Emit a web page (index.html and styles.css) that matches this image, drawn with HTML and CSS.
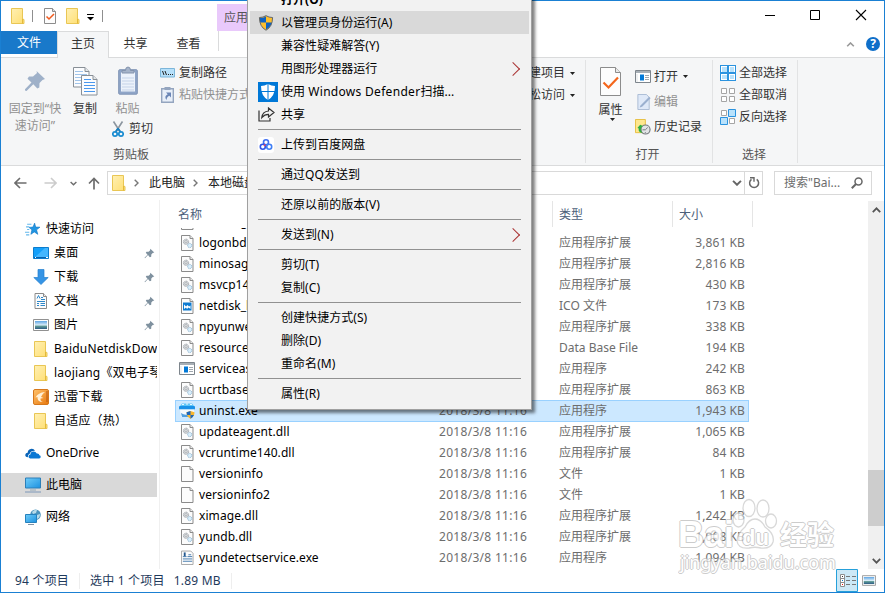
FILE: index.html
```html
<!DOCTYPE html>
<html lang="zh-CN">
<head>
    <meta charset="UTF-8">
    <title>BaiduNetdisk</title>
    <link rel="stylesheet" href="styles.css">
</head>
<body>
<!-- Icon sprite -->
<svg class="sprite">
    <linearGradient id="gFolder" x1="0" y1="0" x2="1" y2="1"><stop offset="0" stop-color="#fff0b4"/><stop offset="1" stop-color="#ffdf73"/></linearGradient>
    <linearGradient id="gBlue" x1="0" y1="0" x2="1" y2="1"><stop offset="0" stop-color="#70cdf9"/><stop offset="1" stop-color="#1c91e0"/></linearGradient>
    <linearGradient id="gSky" x1="0" y1="0" x2="0" y2="1"><stop offset="0" stop-color="#5fa5e4"/><stop offset=".5" stop-color="#d8ecf8"/><stop offset=".65" stop-color="#5f9a95"/><stop offset="1" stop-color="#2d5b86"/></linearGradient>
    <linearGradient id="gOrange" x1="0" y1="0" x2="1" y2="1"><stop offset="0" stop-color="#ffc36d"/><stop offset="1" stop-color="#e8770b"/></linearGradient>
    <symbol id="folder" viewBox="0 0 14 16"><path d="M.5.5h11v10.500l1.500.500v4H.5z" fill="url(#gFolder)" stroke="#e9c654"/><path d="M11.500 11v4.500" stroke="#e3b93b"/></symbol>
    <symbol id="check-page" viewBox="0 0 12 16"><path d="M.5.5h8l3 3v12H.5z" fill="#fdfdfd" stroke="#8c8c8c"/><path d="M8.500.5v3h3" fill="#ddd" stroke="#8c8c8c"/><path d="M2.500 8.500l2.500 2.500L10 6" fill="none" stroke="#f15a1d" stroke-width="1.500"/></symbol>
    <symbol id="dll" viewBox="0 0 13 16"><path d="M.5.5h8.500l3 3v12H.5z" fill="#fcfcfc" stroke="#8b8b8b"/><path d="M9 .5v3h3" fill="#eee" stroke="#8b8b8b"/><circle cx="5" cy="6.800" r="2.600" fill="#e4e6e8" stroke="#9aa0a6" stroke-width="1" stroke-dasharray="1.200 .5"/><circle cx="5" cy="6.800" r="1.200" fill="#fff" stroke="#8a9096" stroke-width=".7"/><circle cx="8.700" cy="10.500" r="2.100" fill="#d9eefa" stroke="#8fb6d3" stroke-width="1" stroke-dasharray="1.200 .5"/></symbol>
    <symbol id="page" viewBox="0 0 13 16"><path d="M.5.5h8.500l3 3v12H.5z" fill="#fcfcfc" stroke="#8b8b8b"/><path d="M9 .5v3h3" fill="#eee" stroke="#8b8b8b"/></symbol>
    <symbol id="ico" viewBox="0 0 13 16"><path d="M.5.5h8.500l3 3v12H.5z" fill="#fcfcfc" stroke="#8b8b8b"/><path d="M9 .5v3h3" fill="#eee" stroke="#8b8b8b"/><path d="M2 4.500h8.500v8H2z" fill="#0d7ad0"/><path d="M3 6.500l2 2 1.500-1.500 1.500 1.500 1.500-1V11l-2-1.500-1.500 1.500L5 9.500 3 11z" fill="#fff"/></symbol>
    <symbol id="app" viewBox="0 0 16 13"><path d="M.5.5h15v12H.5z" fill="#fff" stroke="#7d858c"/><path d="M1 1h14v2H1z" fill="#a7afb6"/><path d="M5 4.500h4v6H5z" fill="#0078d7"/><path d="M10 5.500h4M10 7.500h4M10 9.500h4" stroke="#9fa7ae"/><path d="M2 4v8" stroke="#dfe3e6"/></symbol>
    <symbol id="uninst" viewBox="0 0 16 16"><path d="M1 3L3 .5h10L15 3z" fill="#5cc4f8"/><path d="M3 1.500h2M7 1h2M11 1.500h2" stroke="#e9f7ff"/><rect x="0" y="3" width="16" height="3.500" rx="1" fill="#1991e8"/><path d="M1 6.500h14V14H2z" fill="#f4f9fd"/><path d="M2 10q4 3 8 1v3H3z" fill="#4f9ee0"/><path d="M11.500 8l4 1.200q0 4.500-4 6.500-4-2-4-6.500z" fill="#f9b62c"/><path d="M11.500 8v4H8L7.500 9.200zM11.500 12h3.500q-.9 2.500-3.500 3.700z" fill="#1c66bd"/></symbol>
    <symbol id="service" viewBox="0 0 14 16"><path d="M.5.5h10l2.500 2.500v12H.5z" fill="#fcfcfc" stroke="#a5a5a5"/><path d="M2 6.500h4M8 4.500h3M7 6.500h5M2 9h10M2 11.500h10" stroke="#3f76ab"/><path d="M3 2h2v4H3z" fill="#24588f"/></symbol>
    <symbol id="pin-s" viewBox="0 0 11 11"><path d="M6.300.8L10.300 4.600 8.700 5.100 7.300 6.500 7.200 8.700 5.800 9.200 4 7.100 1 10.200.5 9.800 3.500 6.700 1.800 4.800 2.500 3.700 4.600 3.800 6 2.400z" fill="#7f919f"/></symbol>
    <symbol id="star" viewBox="0 0 15 14"><path d="M9 1.500l1 3.700 4 .1-3.200 2.500 1.200 4.200-3.300-2.300L5.500 12l1-4.200-2.700-2.300 3.700-.3z" fill="#2196e3" stroke="#1178c4" stroke-width=".6"/><path d="M2 2.500h4M1 5h3M2 7.500h2M0 10h4M1 12.500h3" stroke="#64b8ec"/></symbol>
    <symbol id="desktop" viewBox="0 0 16 12"><path d="M.5.5h15v11H.5z" fill="#14a0fa" stroke="#0c7ccd"/><path d="M1 11L12 1h3v10z" fill="#43b6ff"/><path d="M1 10.500h14" stroke="#0861ae"/><path d="M2 10.500h1M13 10.500h2" stroke="#fff"/></symbol>
    <symbol id="down" viewBox="0 0 16 16"><path d="M5 .5h6v8h4.200L8 15.500.8 8.500H5z" fill="#3594e5" stroke="#247fce" stroke-width=".7"/></symbol>
    <symbol id="doc" viewBox="0 0 13 16"><path d="M.5.5h8.500l3 3v12H.5z" fill="#fcfcfc" stroke="#8b8b8b"/><path d="M9 .5v3h3" fill="#eee" stroke="#8b8b8b"/><path d="M2.500 5.500L4 2.500l1.500 3M6.500 4.500h2M6.500 6.500h4M2.500 8.500h8M2.500 10.500h2M6 10.500h4.500M2.500 12.500h2M6 12.500h4.500" fill="none" stroke="#2d87c9"/></symbol>
    <symbol id="picture" viewBox="0 0 16 12"><path d="M.5.5h15v11H.5z" fill="#fff" stroke="#919191"/><path d="M2 2h12v8H2z" fill="url(#gSky)"/></symbol>
    <symbol id="xunlei" viewBox="0 0 16 16"><rect x=".5" y=".5" width="15" height="15" rx="1.500" fill="url(#gOrange)" stroke="#d6781c"/><path d="M14 2v11" stroke="#b7560e"/><path d="M12 3Q5 3.500 2.500 8.500l2-.5Q4 13 10 13 7 12 7.500 9.500L10.500 9 8 8Q9 5 12 3z" fill="#fff0d6"/></symbol>
    <symbol id="onedrive" viewBox="0 0 17 11"><path d="M3 9.500Q0 9.300.3 6.800.6 5 2.800 4.800 3 1.500 6 .7q3-.7 4.700 1.800-4.700-.3-5.700 3.200Q2.700 6.500 3 9.500z" fill="#0a64b8"/><path d="M5.500 10.800Q3.500 10.500 3.700 8.500 4 6.800 5.700 6.600 6 3.500 9 3.300q2.500 0 3.500 2.300 2.500-.4 2.800 1.800 1.500.3 1.400 1.800-.1 1.500-1.700 1.600z" fill="#0a78d4"/></symbol>
    <symbol id="pc" viewBox="0 0 16 15"><path d="M.5.5h15v10H.5z" fill="url(#gBlue)" stroke="#2d7fb8"/><path d="M5 12.500h6" stroke="#95a9b8"/><path d="M0 14.500h16" stroke="#7c97b8"/></symbol>
    <symbol id="network" viewBox="0 0 16 16"><circle cx="10.500" cy="5.800" r="5.300" fill="#4b93bd"/><path d="M7 3q3-3 5-2l-1 3-3 1zM12 6l3-1q0 4-3 5z" fill="#b9dcea"/><path d="M.5 5.500h11v8H.5z" fill="url(#gBlue)" stroke="#2681bd"/><path d="M3 15.500h6" stroke="#8193a5"/></symbol>
    <symbol id="shield" viewBox="0 0 16 17"><path d="M8 .7q3 2 7 2-.1 9.800-7 13.500Q1.100 12.500 1 2.700q4 0 7-2z" fill="#fdbf2d"/><path d="M8 1.500V8H1.800Q1.500 6 1.500 3.300 5 3.200 8 1.500z" fill="#0f62c1"/><path d="M8 8h6.200Q13 13 8 15.500z" fill="#0f62c1"/><path d="M8 .7q3 2 7 2-.1 9.800-7 13.500Q1.100 12.500 1 2.700q4 0 7-2z" fill="none" stroke="#57606b"/></symbol>
    <symbol id="pin-l" viewBox="0 0 22 22"><path d="M12.500 1L21 9l-2.500 1L15.500 13l-.2 4.500-2 1-4-4.200L2.500 21 1 20.500v-1.300l6.500-6.600-4-3.800L5 6.500h4l4-3.500z" fill="#9fb1c9"/></symbol>
    <symbol id="copy" viewBox="0 0 25 29"><g fill="#fbfcfe" stroke="#888f96"><path d="M.5.5h11.500l4 4v15.500H.5z"/><path d="M12 .5v4h4" fill="#e5e8ea"/></g><path d="M2 4.500h8M2 7.500h12M2 10.500h12M2 13.500h12M2 16.500h12" stroke="#a0c4ea"/><g fill="#fbfcfe" stroke="#888f96"><path d="M8.500 8.500H20l4 4v15.500H8.500z"/><path d="M20 8.500v4h4" fill="#e5e8ea"/></g><path d="M11 12.500h7M11 15.500h11M11 18.500h11M11 21.500h11M11 24.500h11" stroke="#4a98ee"/></symbol>
    <symbol id="paste" viewBox="0 0 20 29"><rect x=".7" y="3.700" width="18.600" height="24.500" rx="1" fill="#8fa5c8" stroke="#8094b5"/><path d="M3 6h14v19.500H3z" fill="#ecf2fb"/><path d="M4 12h12M4 15h12M4 18h12M4 21h12M4 24h12" stroke="#c5d3e8"/><path d="M4 7V4.500h3.500Q7.500 1 10 1t2.500 3.500H16V7z" fill="#a5b3c9" stroke="#8393ad"/></symbol>
    <symbol id="cut" viewBox="0 0 12 17"><path d="M1.500.5L8 10.500M10.500.5L4 10.500" stroke="#8b959f" stroke-width="1.600"/><path d="M6 7.500L3.500 11M6 7.500L8.500 11" stroke="#187fc0" stroke-width="1.800"/><circle cx="3" cy="13" r="2.200" fill="none" stroke="#188bd0" stroke-width="1.700"/><circle cx="9" cy="13" r="2.200" fill="none" stroke="#188bd0" stroke-width="1.700"/></symbol>
    <symbol id="path" viewBox="0 0 15 10"><path d="M.5.5h14v8.500H.5z" fill="#b6e0fa" stroke="#7cb6da"/><path d="M2.500 3l1.500 4M5 3l1.500 4" stroke="#222"/><path d="M8 6.500h1M10 6.500h1M12 6.500h1" stroke="#222"/></symbol>
    <symbol id="shortcut" viewBox="0 0 13 16"><path d="M.7 1.700h11.600v13.600H.7z" fill="#e8eff9" stroke="#94a5bf" stroke-width="1.400"/><path d="M3.500 0h6v3h-6z" fill="#94a5bf"/><path d="M5 5.500h5v5L8.300 8.800Q5.500 10 5.700 13 2.500 9.500 6.700 7.200z" fill="#6b86b6"/></symbol>
    <symbol id="props" viewBox="0 0 21 29"><path d="M.5.500h15l5 5v23H.5z" fill="#fdfdfd" stroke="#8c8c8c"/><path d="M15.500.5v5h5" fill="#e9e9e9" stroke="#8c8c8c"/><path d="M3.500 15.500l5 5L18 10.500" fill="none" stroke="#f4661c" stroke-width="2.200"/></symbol>
    <symbol id="edit" viewBox="0 0 14 17"><path d="M.5.500h9l3 3v13H.5z" fill="#dfe9f8" stroke="#a9bad3"/><path d="M3 12.500L12.500 3l1.500 1.500L5 13.500l-2.500.8z" fill="#9bb0cf"/></symbol>
    <symbol id="history" viewBox="0 0 17 17"><path d="M.5.500h10.500v14H.5z" fill="#fee78f" stroke="#e5bd3d"/><circle cx="11.200" cy="11.200" r="4.800" fill="#e2e4e6" stroke="#74797e" stroke-width="1.200"/><path d="M11 11.500l2.500-2.500M8 11.500h3M11 14v1" stroke="#70757a"/><path d="M2.500 9.500L5.500 6l3 1.500-1.500 1q-2 3 1 6.500-5-1-4-5z" fill="#2eae43"/></symbol>
    <symbol id="all" viewBox="0 0 16 16"><path d="M0 0h16v16H0z" fill="#2b93df"/><path d="M1 1h6v6H1zM9 1h6v6H9zM1 9h6v6H1zM9 9h6v6H9z" fill="#fff"/><path d="M2 2h5v5H2zM10 2h4v5h-4zM2 10h5v4H2zM10 10h4v4h-4z" fill="#b9e2fc"/></symbol>
    <symbol id="none" viewBox="0 0 16 16"><path d="M1.500 1.500h5v5h-5zM9.500 1.500h5v5h-5zM1.500 9.500h5v5h-5zM9.500 9.500h5v5h-5z" fill="#fff" stroke="#a5a5a5"/></symbol>
    <symbol id="invert" viewBox="0 0 16 16"><path d="M1.500 1.500h5v5h-5zM9.500 9.500h5v5h-5z" fill="#fff" stroke="#a5a5a5"/><path d="M8.500.500h7v7h-7zM.5 8.500h7v7H.5z" fill="#b9e2fc" stroke="#2b93df"/></symbol>
    <symbol id="caret" viewBox="0 0 5 3"><path d="M0 0h5L2.500 3z" fill="#222"/></symbol>
    <symbol id="left" viewBox="0 0 13 12"><path d="M12.500 6H1.500M6 1L1 6l5 5" fill="none" stroke="currentColor" stroke-width="1.600"/></symbol>
    <symbol id="right" viewBox="0 0 13 12"><path d="M.5 6h11M7 1l5 5-5 5" fill="none" stroke="currentColor" stroke-width="1.600"/></symbol>
    <symbol id="up" viewBox="0 0 12 13"><path d="M6 12.500V1.500M1 6.500l5-5 5 5" fill="none" stroke="currentColor" stroke-width="1.700"/></symbol>
    <symbol id="chev-d" viewBox="0 0 8 5"><path d="M.7.700L4 4 7.300.7" fill="none" stroke="currentColor" stroke-width="1.600"/></symbol>
    <symbol id="chev-u" viewBox="0 0 8 5"><path d="M.7 4.300L4 1l3.300 3.300" fill="none" stroke="currentColor" stroke-width="1.600"/></symbol>
    <symbol id="chev-r" viewBox="0 0 5 8"><path d="M.7.700L4 4 .7 7.300" fill="none" stroke="currentColor" stroke-width="1.400"/></symbol>
</svg>

<div class="window">
    <!-- Title bar -->
    <div class="titlebar">
        <svg class="t-folder"><use href="#folder"/></svg>
        <i class="t-line"></i>
        <svg class="t-check"><use href="#check-page"/></svg>
        <svg class="t-folder2"><use href="#folder"/></svg>
        <svg class="t-more" viewBox="0 0 7 7"><path d="M0 .5h7" stroke="#000"/><path d="M0 3h7L3.500 6.500z"/></svg>
        <i class="t-line"></i>
        <div class="context-tab">应用程序工具</div>
        <svg class="win-buttons" viewBox="0 0 104 12"><path d="M0 6.500h10M45.500 1.500h9v9h-9z" fill="none" stroke="#000"/><path d="M91 1l10 10M101 1L91 11" stroke="#000" stroke-width="1.100"/></svg>
    </div>

    <div class="tabs">
        <div class="tab file">文件</div>
        <div class="tab active">主页</div>
        <div class="tab">共享</div>
        <div class="tab">查看</div>
        <i class="tab-line"></i>
        <div class="tabs-right">
            <svg class="collapse"><use href="#chev-u"/></svg>
            <span class="help">?</span>
        </div>
    </div>

    <!-- Ribbon -->
    <div class="ribbon">
        <div class="group clipboard">
            <div class="group-body">
                <div class="big pin disabled"><svg><use href="#pin-l"/></svg><span>固定到“快<br>速访问”</span></div>
                <div class="big copy"><svg><use href="#copy"/></svg><span>复制</span></div>
                <div class="paste-col">
                    <div class="big paste disabled"><svg><use href="#paste"/></svg><span>粘贴</span></div>
                    <div class="small cut"><svg><use href="#cut"/></svg>剪切</div>
                </div>
                <div class="small-col paths">
                    <div class="small"><svg class="i-path"><use href="#path"/></svg>复制路径</div>
                    <div class="small disabled"><svg class="i-short"><use href="#shortcut"/></svg>粘贴快捷方式</div>
                </div>
            </div>
            <div class="group-title">剪贴板</div>
        </div>
        <div class="group new">
            <div class="group-body small-col">
                <div class="small">新建项目<svg class="caret"><use href="#caret"/></svg></div>
                <div class="small">轻松访问<svg class="caret"><use href="#caret"/></svg></div>
            </div>
        </div>
        <div class="group open">
            <div class="group-body">
                <div class="big props"><svg><use href="#props"/></svg><span>属性</span><svg class="caret"><use href="#caret"/></svg></div>
                <div class="small-col">
                    <div class="small"><svg class="i-app"><use href="#app"/></svg>打开<svg class="caret"><use href="#caret"/></svg></div>
                    <div class="small disabled"><svg class="i-edit"><use href="#edit"/></svg>编辑</div>
                    <div class="small"><svg class="i-hist"><use href="#history"/></svg>历史记录</div>
                </div>
            </div>
            <div class="group-title">打开</div>
        </div>
        <div class="group select">
            <div class="group-body small-col">
                <div class="small"><svg><use href="#all"/></svg>全部选择</div>
                <div class="small"><svg><use href="#none"/></svg>全部取消</div>
                <div class="small"><svg><use href="#invert"/></svg>反向选择</div>
            </div>
            <div class="group-title">选择</div>
        </div>
    </div>

    <!-- Address bar -->
    <div class="navbar">
        <svg class="n-back"><use href="#left"/></svg>
        <svg class="n-fwd"><use href="#right"/></svg>
        <svg class="n-recent"><use href="#chev-d"/></svg>
        <svg class="n-up"><use href="#up"/></svg>
        <div class="address">
            <svg class="a-folder"><use href="#folder"/></svg>
            <svg class="a-chev"><use href="#chev-r"/></svg>
            <span>此电脑</span>
            <svg class="a-chev"><use href="#chev-r"/></svg>
            <span>本地磁盘</span>
            <svg class="a-drop"><use href="#chev-d"/></svg>
            <div class="refresh"><svg viewBox="0 0 12 12"><path d="M3.500 2.300A4.500 4.500 0 1 0 8.700 2.300" fill="none" stroke="#666" stroke-width="1.500"/><path d="M2 .8h4v4" fill="none" stroke="#666" stroke-width="1.400"/></svg></div>
        </div>
        <div class="search"><span>搜索"Bai...</span><svg viewBox="0 0 12 12"><circle cx="7.500" cy="4.500" r="3.500" fill="none" stroke="#666" stroke-width="1.500"/><path d="M5 7L.8 11.300" stroke="#666" stroke-width="2"/></svg></div>
    </div>

    <div class="main">
        <div class="sidebar">
            <div class="side top"><svg class="s-star"><use href="#star"/></svg>快速访问</div>
            <div class="side"><svg class="s-wide"><use href="#desktop"/></svg>桌面<svg class="pin-s"><use href="#pin-s"/></svg></div>
            <div class="side"><svg><use href="#down"/></svg>下载<svg class="pin-s"><use href="#pin-s"/></svg></div>
            <div class="side"><svg><use href="#doc"/></svg>文档<svg class="pin-s"><use href="#pin-s"/></svg></div>
            <div class="side"><svg class="s-wide"><use href="#picture"/></svg>图片<svg class="pin-s"><use href="#pin-s"/></svg></div>
            <div class="side"><svg><use href="#folder"/></svg>BaiduNetdiskDow</div>
            <div class="side"><svg><use href="#folder"/></svg>laojiang《双电子琴</div>
            <div class="side"><svg><use href="#xunlei"/></svg>迅雷下载</div>
            <div class="side"><svg><use href="#folder"/></svg>自适应（热）</div>
            <div class="side top root"><svg class="s-cloud"><use href="#onedrive"/></svg>OneDrive</div>
            <div class="side top root current"><svg><use href="#pc"/></svg>此电脑</div>
            <div class="side top root"><svg><use href="#network"/></svg>网络</div>
        </div>

        <div class="files">
            <div class="file-head">
                <span>名称</span><span>修改日期</span><span>类型</span><span>大小</span>
            </div>
            <div class="file-list">
                <div class="row"><svg><use href="#dll"/></svg><span>kernel_gc.dll</span><span></span><span></span><span></span></div>
                <div class="row"><svg><use href="#dll"/></svg><span>logonbd.dll</span><span>2018/3/8 11:16</span><span>应用程序扩展</span><span>3,861 KB</span></div>
                <div class="row"><svg><use href="#dll"/></svg><span>minosagent.dll</span><span>2018/3/8 11:16</span><span>应用程序扩展</span><span>2,816 KB</span></div>
                <div class="row"><svg><use href="#dll"/></svg><span>msvcp140.dll</span><span>2018/3/8 11:16</span><span>应用程序扩展</span><span>430 KB</span></div>
                <div class="row"><svg><use href="#ico"/></svg><span>netdisk_logo.ico</span><span>2018/3/8 11:16</span><span>ICO 文件</span><span>173 KB</span></div>
                <div class="row"><svg><use href="#dll"/></svg><span>npyunweb.dll</span><span>2018/3/8 11:16</span><span>应用程序扩展</span><span>338 KB</span></div>
                <div class="row"><svg><use href="#dll"/></svg><span>resource.db</span><span>2018/3/8 11:16</span><span>Data Base File</span><span>194 KB</span></div>
                <div class="row"><svg class="f-app"><use href="#app"/></svg><span>serviceas.exe</span><span>2018/3/8 11:16</span><span>应用程序</span><span>242 KB</span></div>
                <div class="row"><svg><use href="#dll"/></svg><span>ucrtbase.dll</span><span>2018/3/8 11:16</span><span>应用程序扩展</span><span>863 KB</span></div>
                <div class="row selected"><svg class="f-wide"><use href="#uninst"/></svg><span>uninst.exe</span><span>2018/3/8 11:16</span><span>应用程序</span><span>1,943 KB</span></div>
                <div class="row"><svg><use href="#dll"/></svg><span>updateagent.dll</span><span>2018/3/8 11:16</span><span>应用程序扩展</span><span>1,065 KB</span></div>
                <div class="row"><svg><use href="#dll"/></svg><span>vcruntime140.dll</span><span>2018/3/8 11:16</span><span>应用程序扩展</span><span>84 KB</span></div>
                <div class="row"><svg><use href="#page"/></svg><span>versioninfo</span><span>2018/3/8 11:16</span><span>文件</span><span>1 KB</span></div>
                <div class="row"><svg><use href="#page"/></svg><span>versioninfo2</span><span>2018/3/8 11:16</span><span>文件</span><span>1 KB</span></div>
                <div class="row"><svg><use href="#dll"/></svg><span>ximage.dll</span><span>2018/3/8 11:16</span><span>应用程序扩展</span><span>1,242 KB</span></div>
                <div class="row"><svg><use href="#dll"/></svg><span>yundb.dll</span><span>2018/3/8 11:16</span><span>应用程序扩展</span><span>1,008 KB</span></div>
                <div class="row"><svg><use href="#service"/></svg><span>yundetectservice.exe</span><span>2018/3/8 11:16</span><span>应用程序</span><span>1,094 KB</span></div>
            </div>
        </div>

        <div class="scrollbar">
            <svg><use href="#chev-u"/></svg>
            <div class="thumb"></div>
            <svg><use href="#chev-d"/></svg>
        </div>
    </div>

    <div class="statusbar">
        <span class="count">94 个项目</span>
        <span class="picked">选中 1 个项目<em>1.89 MB</em></span>
        <div class="views">
            <svg class="v-details" viewBox="0 0 22 23"><path d="M.5.500h21v22H.5z" fill="#cce8f6" stroke="#26a0da"/><path d="M4.500 5.500h4v12h-4zM4.500 9.500h4M4.500 13.500h4" fill="#fff" stroke="#8d8d8d"/><path d="M10 7.500h4M16 7.500h4M10 11.500h4M16 11.500h4M10 15.500h4M16 15.500h4" stroke="#777"/><path d="M6 7.500h1" stroke="#333"/><path d="M6 11.500h1" stroke="#07c"/><path d="M6 15.500h1" stroke="#e11"/></svg>
            <svg class="v-icons"><use href="#picture"/></svg>
        </div>
    </div>
</div>

<!-- Context menu -->
<div class="menu">
    <div class="item default">打开(O)</div>
    <div class="item hover"><svg class="m-shield"><use href="#shield"/></svg>以管理员身份运行(A)</div>
    <div class="item">兼容性疑难解答(Y)</div>
    <div class="item sub">用图形处理器运行</div>
    <div class="item"><svg class="m-defender" viewBox="0 0 20 20"><path d="M0 0h20v20H0z" fill="#0078d7"/><path d="M10 2q3.500 2 7 2 0 10-7 14Q3 14 3 4q3.500 0 7-2z" fill="#fff"/><path d="M10 1.500v17M2 9.500h16" stroke="#0078d7"/></svg><span>使用 <b>Windows Defender</b>扫描...</span></div>
    <div class="item"><svg class="m-share" viewBox="0 0 17 15"><path d="M1 3.500V14h11v-3" fill="none" stroke="#333" stroke-width="1.200"/><path d="M3.800 10.500Q4.500 4.500 10.500 4V1l5.500 4.500-5.500 4.500V7.300Q6.500 7.300 3.800 10.500z" fill="none" stroke="#333" stroke-width="1.200"/></svg>共享</div>
    <div class="sep"></div>
    <div class="item"><svg class="m-baidu" viewBox="0 0 16 16"><rect width="16" height="16" rx="3" fill="#fff"/><g fill="none" stroke-width="1.600"><circle cx="8" cy="5.300" r="2.500" stroke="#3f6ff2"/><circle cx="4.800" cy="9.800" r="2.500" stroke="#2d55e8"/><circle cx="11.200" cy="9.800" r="2.500" stroke="#3f7ff5"/></g><circle cx="6.700" cy="8.300" r="1" fill="#ec3f5c"/></svg>上传到百度网盘</div>
    <div class="sep"></div>
    <div class="item">通过QQ发送到</div>
    <div class="sep"></div>
    <div class="item">还原以前的版本(V)</div>
    <div class="sep"></div>
    <div class="item sub">发送到(N)</div>
    <div class="sep"></div>
    <div class="item">剪切(T)</div>
    <div class="item">复制(C)</div>
    <div class="sep"></div>
    <div class="item">创建快捷方式(S)</div>
    <div class="item">删除(D)</div>
    <div class="item">重命名(M)</div>
    <div class="sep"></div>
    <div class="item">属性(R)</div>
</div>

<div class="watermark">
    <svg viewBox="0 0 46 54"><g fill="#fff" stroke="#ccc" stroke-width="1.300"><ellipse cx="17" cy="10" rx="6" ry="8.500"/><ellipse cx="31" cy="10.500" rx="6" ry="8.500"/><ellipse cx="6.500" cy="22" rx="5.500" ry="7"/><ellipse cx="39" cy="23" rx="5.500" ry="7"/><path d="M23 21Q29 21 33 29 43 36 41 44 39 51 29 50q-6-1.500-12 0Q6 51 5 43 5 36 13 29 17 21 23 21z"/></g></svg>
    <span class="wm-bai">Bai</span>
    <span class="wm-du">du</span>
    <span class="wm-jy">经验</span>
    <span class="wm-url">jingyan.baidu.com</span>
</div>
</body>
</html>
```
FILE: styles.css
```css
* {
    box-sizing: border-box;
}

body {
    margin: 0;
    width: 885px;
    height: 593px;
    overflow: hidden;
    position: relative;
    font-family: "Noto Sans", "Noto Sans CJK SC", sans-serif;
    font-size: 12px;
    line-height: 16px;
    color: #000;
    white-space: nowrap;
}

svg {
    display: block;
    flex: none;
    width: 16px;
    height: 16px;
}

.sprite {
    position: absolute;
    width: 0;
    height: 0;
}

.window {
    display: flex;
    flex-direction: column;
    height: 593px;
    border: 1px solid #1a80d3;
    background-color: #fff;
}

/* Title bar */
.titlebar {
    display: flex;
    align-items: center;
    height: 30px;
    padding-left: 10px;
}

.t-folder,
.t-folder2 {
    width: 14px;
}

.t-line {
    width: 1px;
    height: 12px;
    margin: 0 11px 0 7px;
    background-color: #8f8f8f;
}

.t-check {
    width: 12px;
    margin-right: 10px;
}

.t-more {
    width: 7px;
    height: 7px;
    margin-left: 7px;
    margin-right: 1px;
    margin-top: 2px;
}

.context-tab {
    align-self: flex-end;
    width: 100px;
    height: 27px;
    margin-left: 103px;
    padding: 6px 7px;
    background-color: #e9c9fb;
    color: #555;
}

.win-buttons {
    width: 104px;
    height: 12px;
    margin-left: auto;
    margin-right: 15px;
    margin-bottom: 2px;
}

/* Tabs */
.tabs {
    display: flex;
    height: 27px;
    border-bottom: 1px solid #dadbdc;
}

.tab {
    width: 53px;
    padding-top: 5px;
    text-align: center;
    color: #333;
}

.tab.file {
    width: 56px;
    height: 23px;
    padding-top: 4px;
    background-color: #1979ca;
    color: #fff;
}

.tab.active {
    width: 52px;
    height: 27px;
    border: 1px solid #dadbdc;
    border-bottom: none;
    background-color: #f5f6f7;
    padding-top: 4px;
}

.tab-line {
    width: 1px;
    height: 20px;
    margin-left: 3px;
    background-color: #dadbdc;
}

.tabs-right {
    display: flex;
    align-items: center;
    gap: 11px;
    margin-left: auto;
    margin-right: 4px;
}

.collapse {
    width: 9px;
    height: 5px;
    color: #999;
}

.help {
    width: 14px;
    height: 14px;
    border-radius: 50%;
    background-color: #0f6fc9;
    color: #fff;
    font-weight: bold;
    line-height: 14px;
    text-align: center;
}

/* Ribbon */
.ribbon {
    display: flex;
    height: 108px;
    padding-bottom: 2px;
    background-color: #f5f6f7;
    border-bottom: 1px solid #dadbdc;
    color: #333;
}

.group {
    display: flex;
    flex-direction: column;
    justify-content: space-between;
    margin-top: 2px;
    border-right: 1px solid #e2e3e4;
}

.group-body {
    display: flex;
    height: 87px;
}

.group-title {
    height: 16px;
    text-align: center;
    color: #555;
}

.clipboard {
    width: 261px;
}

.new {
    width: 324px;
}

.open {
    width: 127px;
}

.select {
    width: 85px;
}

.disabled {
    color: #919191;
}

.big {
    display: flex;
    flex-direction: column;
    align-items: center;
    padding-top: 7px;
}

.big span {
    line-height: 17px;
    text-align: center;
}

.pin {
    width: 68px;
}

.pin svg {
    width: 22px;
    height: 22px;
    margin: 3px 0 8px;
}

.copy {
    width: 32px;
}

.copy svg {
    width: 25px;
    height: 29px;
    margin-bottom: 4px;
}

.paste-col {
    width: 53px;
}

.paste svg {
    width: 20px;
    height: 29px;
    margin-bottom: 4px;
}

.paste {
    padding-top: 6px;
}

.paste span {
    padding-top: 1px;
}

.small {
    display: flex;
    align-items: center;
    gap: 3px;
    height: 22px;
}

.cut {
    padding-left: 11px;
    margin-top: 1px;
    gap: 5px;
}

.cut svg {
    width: 12px;
    height: 17px;
}

.small-col {
    display: flex;
    flex-direction: column;
}

.paths {
    padding: 2px 0 0 6px;
}

.paths .small {
    gap: 4px;
}

.i-path {
    width: 15px;
    height: 10px;
}

.i-short {
    width: 13px;
    margin: 0 1px;
}

.caret {
    width: 5px;
    height: 3px;
    margin-left: 2px;
}

.new .small-col {
    padding: 2px 10px 0 0;
    align-items: flex-end;
}

.props {
    width: 49px;
}

.props > svg:first-child {
    width: 21px;
    height: 29px;
    margin-bottom: 5px;
}

.props .caret {
    margin: 0 0 0 4px;
}

.open .small-col {
    padding-top: 4px;
}

.open .small {
    height: 25px;
}

.open .i-app {
    height: 13px;
}

.i-edit {
    width: 14px;
    margin-left: 2px;
}

.open .group-title {
    padding-right: 3px;
}

.select .group-body {
    padding: 2px 0 0 7px;
}

.select .group-title {
    padding-right: 2px;
}

/* Address bar */
.navbar {
    display: flex;
    align-items: center;
    height: 34px;
    padding: 0 12px 0 13px;
    color: #6d6d6d;
}

.n-back,
.n-fwd {
    width: 13px;
    height: 12px;
}

.n-fwd {
    margin-left: 17px;
    color: #ccc;
}

.n-recent {
    width: 7px;
    height: 5px;
    margin-left: 13px;
}

.n-up {
    width: 12px;
    height: 13px;
    margin-left: 11px;
}

.address {
    display: flex;
    align-items: center;
    width: 656px;
    height: 24px;
    margin-left: 7px;
    padding-left: 4px;
    border: 1px solid #d9d9d9;
    color: #222;
}

.a-folder {
    width: 14px;
}

.a-chev {
    width: 5px;
    height: 8px;
    margin: 0 10px 0 8px;
    color: #777;
}

.a-drop {
    width: 10px;
    height: 6px;
    margin-left: auto;
    margin-right: 2px;
    color: #666;
}

.refresh {
    display: flex;
    align-items: center;
    justify-content: center;
    width: 18px;
    height: 22px;
    border-left: 1px solid #d9d9d9;
}

.refresh svg {
    width: 12px;
    height: 12px;
}

.search {
    display: flex;
    align-items: center;
    justify-content: space-between;
    width: 98px;
    height: 24px;
    margin-left: auto;
    padding: 0 8px 0 9px;
    border: 1px solid #d9d9d9;
}

.search svg {
    width: 12px;
    height: 12px;
}

/* Sidebar */
.main {
    display: flex;
    height: 369px;
}

.sidebar {
    width: 159px;
    padding-top: 17px;
    border-right: 1px solid #f0f0f0;
}

.side {
    display: flex;
    align-items: center;
    gap: 5px;
    width: 156px;
    height: 24px;
    padding-left: 32px;
    overflow: hidden;
    letter-spacing: 0.2px;
}

.side.top {
    padding-left: 24px;
    gap: 5px;
    letter-spacing: 0;
}

.side.root {
    margin-top: 8px;
}

.side.current {
    background-color: #d9d9d9;
}

.side .s-wide {
    height: 12px;
}

.side .s-cloud {
    height: 11px;
}

.pin-s {
    width: 11px;
    height: 11px;
    margin-left: auto;
    margin-right: 2px;
}

/* File list */
.files {
    flex: 1;
    padding-left: 15px;
}

.file-head {
    display: grid;
    grid-template-columns: 258px 120px 120px 80px;
    height: 28px;
    padding: 1px 0;
    color: #4c607a;
}

.file-head span {
    padding: 6px 0 0 6px;
    border-right: 1px solid #e5e5e5;
}

.file-head span:first-child {
    padding-left: 3px;
}

.file-list {
    height: 341px;
    overflow: hidden;
}

.row {
    display: grid;
    grid-template-columns: 23px 240px 120px 110px 76px;
    align-items: center;
    width: 574px;
    height: 21px;
    padding-left: 1px;
    color: #6d6d6d;
}

.row:first-child {
    margin-top: -17px;
}

.row svg {
    width: 13px;
    margin-left: 5px;
}

.row svg.f-app {
    width: 16px;
    height: 13px;
    margin-left: 3px;
}

.row svg.f-wide {
    width: 16px;
    margin-left: 3px;
}

.row span:nth-child(2) {
    color: #000;
    letter-spacing: 0.08px;
}

.row span:nth-child(3) {
    letter-spacing: 0.3px;
}

.row span:last-child {
    text-align: right;
    letter-spacing: 0.1px;
}

.row.selected {
    height: 22px;
    margin-bottom: -1px;
    padding-left: 0;
    border: 1px solid #99d1ff;
    background-color: #cce8ff;
}

.scrollbar {
    display: flex;
    flex-direction: column;
    align-items: center;
    width: 16px;
    margin-top: 1px;
    padding: 6px 0 5px;
    background-color: #f0f0f0;
    color: #555;
}

.scrollbar svg {
    width: 9px;
    height: 6px;
}

.thumb {
    width: 16px;
    height: 56px;
    margin: 257px 0 auto;
    background-color: #cdcdcd;
}

/* Status bar */
.statusbar {
    display: flex;
    align-items: center;
    height: 23px;
    padding-left: 14px;
    color: #1e395b;
}

.count {
    width: 65px;
    border-right: 1px solid #eee;
    letter-spacing: 0.2px;
}

.picked {
    width: 152px;
    padding-left: 10px;
    border-right: 1px solid #eee;
    letter-spacing: 0.2px;
}

.picked em {
    margin-left: 9px;
    font-style: normal;
}

.views {
    display: flex;
    align-items: center;
    gap: 4px;
    margin-left: auto;
    margin-right: 8px;
}

.v-details {
    width: 22px;
    height: 23px;
}

.v-icons {
    width: 14px;
    height: 11px;
}

/* Context menu */
.menu {
    position: absolute;
    left: 247px;
    top: -15px;
    width: 285px;
    padding: 2px 2px 4px;
    border: 1px solid #a0a0a0;
    background-color: #f2f2f2;
    box-shadow: 3px 3px 3px rgba(0, 0, 0, 0.5);
}

.item {
    display: flex;
    align-items: center;
    position: relative;
    height: 23px;
    padding-left: 31px;
    letter-spacing: 0.05px;
}

.item.default {
    font-weight: bold;
}

.item.hover {
    background-color: #d9d9d9;
}

.item b {
    font-weight: normal;
    letter-spacing: 0.3px;
}

.item svg {
    position: absolute;
    left: 8px;
}

.item .m-defender {
    width: 20px;
    height: 20px;
}

.item .m-share {
    width: 17px;
    height: 15px;
}

.item.sub::after {
    content: "";
    width: 9px;
    height: 9px;
    margin-left: auto;
    margin-right: 11px;
    border-top: 1px solid #a33;
    border-right: 1px solid #a33;
    transform: rotate(45deg);
}

.sep {
    height: 7px;
    margin: 0 8px;
    padding-top: 3px;
}

.sep::before {
    content: "";
    display: block;
    height: 1px;
    background-color: #919191;
}

/* Watermark */
.watermark {
    position: absolute;
    left: 678px;
    top: 497px;
    width: 162px;
    height: 78px;
    color: #fff;
    opacity: 0.75;
    text-shadow: 1px 0 #bbb, -1px 0 #bbb, 0 1px #bbb, 0 -1px #bbb;
}

.watermark svg {
    position: absolute;
    left: 54px;
    top: 1px;
    width: 46px;
    height: 54px;
}

.watermark span {
    position: absolute;
    font-weight: bold;
}

.watermark .wm-bai {
    left: 0;
    top: 20px;
    font: bold 36px/36px "Liberation Sans", sans-serif;
}

.watermark .wm-du {
    left: 64px;
    top: 29px;
    font: bold 22px/24px "Liberation Sans", sans-serif;
}

.watermark .wm-jy {
    left: 102px;
    top: 20px;
    font-size: 27px;
    line-height: 36px;
}

.watermark .wm-url {
    left: 2px;
    top: 55px;
    font: normal 18px/20px "Noto Sans", sans-serif;
}
```
